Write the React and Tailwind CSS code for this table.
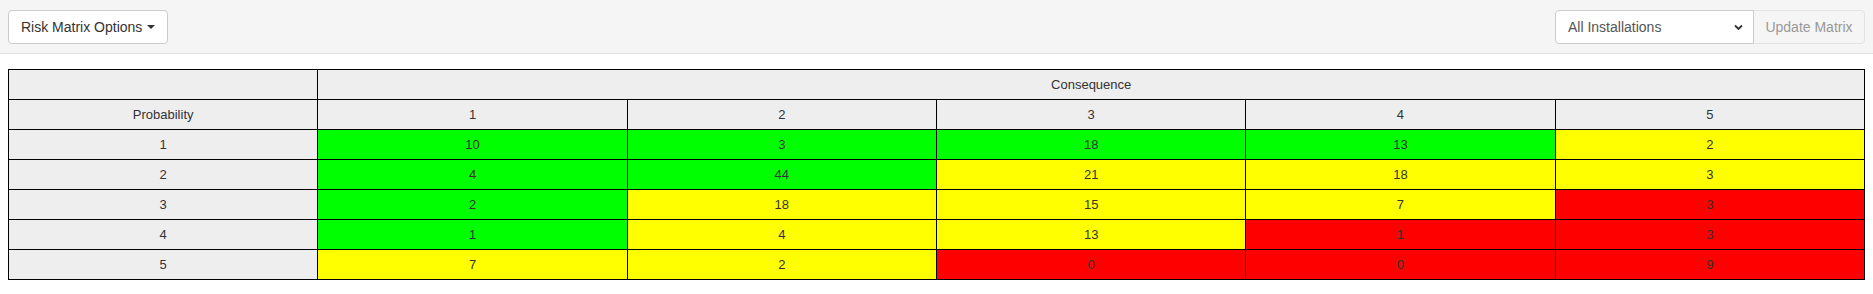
import React from "react";

const matrix = [
  [10, 3, 18, 13, 2],
  [4, 44, 21, 18, 3],
  [2, 18, 15, 7, 3],
  [1, 4, 13, 1, 3],
  [7, 2, 0, 0, 9],
];

// risk colour for each probability/consequence cell
const levels = [
  ["g", "g", "g", "g", "y"],
  ["g", "g", "y", "y", "y"],
  ["g", "y", "y", "y", "r"],
  ["g", "y", "y", "r", "r"],
  ["y", "y", "r", "r", "r"],
];

const colorClass = {
  g: "bg-[#00ff00]",
  y: "bg-[#ffff00]",
  r: "bg-[#ff0000]",
};

const cell = "border border-black h-[30px] p-0 text-center align-middle";

const App = () => {
  return (
    <div className="w-full bg-white text-[#333] font-['Liberation_Sans',Arial,sans-serif]">
      <div className="flex items-center justify-between h-[54px] px-2 bg-[#f5f5f5] border-b border-[#e3e3e3]">
        <button className="flex items-center gap-1 h-[34px] px-3 bg-white border border-[#ccc] rounded text-sm text-[#333]">
          Risk Matrix Options
          <span className="ml-[1px] w-0 h-0 border-x-4 border-x-transparent border-t-4 border-t-[#333]" />
        </button>
        <div className="flex items-center">
          <div className="relative flex items-center w-[199px] h-[34px] bg-white border border-[#ccc] rounded-l pl-3 text-sm text-[#555]">
            All Installations
            <svg
              className="absolute right-[10px] top-[13px]"
              width="9"
              height="7"
              viewBox="0 0 9 7"
            >
              <path d="M1 1.5 L4.5 5 L8 1.5" stroke="#333" strokeWidth="1.8" fill="none" />
            </svg>
          </div>
          <button className="h-[34px] w-[112px] -ml-px bg-[#f5f5f5] border border-[#e3e3e3] rounded-r text-sm text-[#999]">
            Update Matrix
          </button>
        </div>
      </div>
      <div className="px-2 pt-[15px] pb-4">
        <table className="w-full table-fixed border-collapse text-[13px]">
          <tbody>
            <tr className="bg-[#eeeeee]">
              <td className={cell}></td>
              <td className={cell} colSpan={5}>
                Consequence
              </td>
            </tr>
            <tr className="bg-[#eeeeee]">
              <td className={cell}>Probability</td>
              {[1, 2, 3, 4, 5].map((c) => (
                <td key={c} className={cell}>
                  {c}
                </td>
              ))}
            </tr>
            {matrix.map((row, i) => (
              <tr key={i}>
                <td className={`${cell} bg-[#eeeeee]`}>{i + 1}</td>
                {row.map((v, j) => (
                  <td key={j} className={`${cell} ${colorClass[levels[i][j]]}`}>
                    {v}
                  </td>
                ))}
              </tr>
            ))}
          </tbody>
        </table>
      </div>
    </div>
  );
};

export default App;
